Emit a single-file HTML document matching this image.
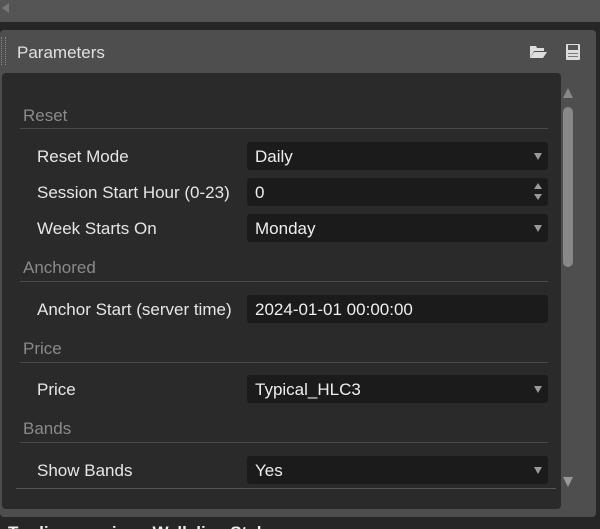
<!DOCTYPE html><html><head><style>
html,body{margin:0;width:600px;height:529px;overflow:hidden}
body{background:#262626;font-family:"Liberation Sans",sans-serif;position:relative}
.a{position:absolute}
.lbl{position:absolute;left:37px;color:#e6e6e6;font-size:17px}
.in{position:absolute;left:247px;width:301px;height:28px;background:#1b1b1b;border-radius:3px;color:#eee;font-size:17px;line-height:29px;box-sizing:border-box;padding-left:8px}
.sec{position:absolute;left:23px;color:#8a8a8a;font-size:17px}
.hr{position:absolute;left:20px;width:528px;height:1px;background:#4a4a4a}
.dd{position:absolute;right:6px;top:11px;width:0;height:0;border-left:4px solid transparent;border-right:4px solid transparent;border-top:7px solid #999}
</style></head><body>
<div class="a" style="left:0;top:0;width:600px;height:22px;background:#555"></div>
<div class="a" style="left:2px;top:3px;border-right:7px solid #777;border-top:5px solid transparent;border-bottom:5px solid transparent"></div>
<div class="a" style="left:0;top:30px;width:596px;height:487px;background:#4e4e4e;border-radius:4px"></div>
<div class="a" style="left:1px;top:37px;width:3px;height:28px;border-left:1px dotted #888;border-right:1px dotted #888"></div>
<div class="a" style="left:17px;top:43px;color:#e0e0e0;font-size:17px">Parameters</div>
<svg class="a" style="left:528px;top:43px" width="20" height="16"><path d="M2 3h6l1 2h7v3H6l-4 7z" fill="#ddd"/><path d="M6 9h13l-4 6H2z" fill="#ddd"/></svg>
<svg class="a" style="left:565px;top:43px" width="16" height="18"><rect x="1" y="1" width="14" height="16" rx="1" fill="#ddd"/><rect x="3" y="2" width="10" height="5" fill="#555"/><rect x="3" y="10" width="10" height="1" fill="#777"/><rect x="3" y="13" width="10" height="1" fill="#777"/></svg>
<div class="a" style="left:2px;top:73px;width:559px;height:436px;background:#2a2a2a;border-radius:4px"></div>
<div class="a" style="left:563px;top:88px;border-bottom:10px solid #888;border-left:5px solid transparent;border-right:5px solid transparent"></div>
<div class="a" style="left:563px;top:107px;width:10px;height:160px;background:#888;border-radius:5px"></div>
<div class="a" style="left:563px;top:477px;border-top:10px solid #999;border-left:5px solid transparent;border-right:5px solid transparent"></div>
<div class="sec" style="top:106px">Reset</div><div class="hr" style="top:128px"></div>
<div class="lbl" style="top:147px">Reset Mode</div><div class="in" style="top:142px">Daily<div class="dd"></div></div>
<div class="lbl" style="top:183px">Session Start Hour (0-23)</div><div class="in" style="top:178px">0<div class="a" style="right:6px;top:5px;border-bottom:6px solid #999;border-left:4px solid transparent;border-right:4px solid transparent"></div><div class="a" style="right:6px;top:16px;border-top:6px solid #999;border-left:4px solid transparent;border-right:4px solid transparent"></div></div>
<div class="lbl" style="top:219px">Week Starts On</div><div class="in" style="top:214px">Monday<div class="dd"></div></div>
<div class="sec" style="top:258px">Anchored</div><div class="hr" style="top:281px"></div>
<div class="lbl" style="top:300px">Anchor Start (server time)</div><div class="in" style="top:295px">2024-01-01 00:00:00</div>
<div class="sec" style="top:339px">Price</div><div class="hr" style="top:362px"></div>
<div class="lbl" style="top:380px">Price</div><div class="in" style="top:375px">Typical_HLC3<div class="dd"></div></div>
<div class="sec" style="top:419px">Bands</div><div class="hr" style="top:442px"></div>
<div class="lbl" style="top:461px">Show Bands</div><div class="in" style="top:456px">Yes<div class="dd"></div></div>
<div class="hr" style="left:16px;width:540px;top:488px;background:#555"></div>
<div class="a" style="left:8px;top:523px;color:#eee;font-size:17px;font-weight:bold">Trading session - Walk line Style</div>
</body></html>
